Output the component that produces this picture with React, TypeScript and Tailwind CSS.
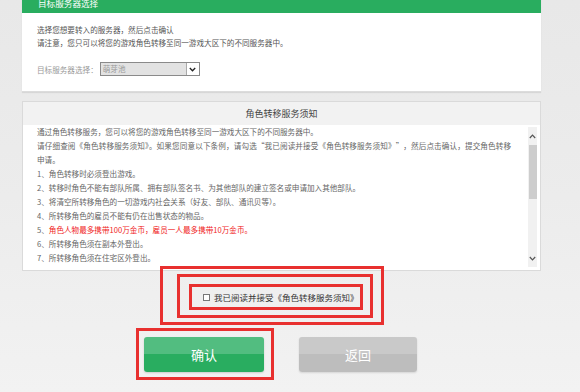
import React from "react";

const Chevron = ({ up }: { up?: boolean }) => (
  <svg width="7" height="5" viewBox="0 0 7 5" className="block">
    <path
      d={up ? "M0.8 4 L3.5 1.2 L6.2 4" : "M0.8 1 L3.5 3.8 L6.2 1"}
      fill="none"
      stroke="#555"
      strokeWidth="1.2"
    />
  </svg>
);

const Q = ({ c }: { c: string }) => (
  <span className="inline-block w-[1em] text-center">{c}</span>
);

export default function App() {
  const lines: { n?: string; t: React.ReactNode; red?: boolean; cls?: string }[] = [
    { t: "通过角色转移服务，您可以将您的游戏角色转移至同一游戏大区下的不同服务器中。" },
    {
      t: (
        <>
          请仔细查阅《角色转移服务须知》。如果您同意以下条例，请勾选
          <Q c={"\u201C"} />
          我已阅读并接受《角色转移服务须知》
          <Q c={"\u201D"} />
          ，然后点击确认，提交角色转移
        </>
      ),
      cls: "tracking-[0.12px]",
    },
    { t: "申请。" },
    { n: "1、", t: "角色转移时必须登出游戏。" },
    { n: "2、", t: "转移时角色不能有部队所属、拥有部队签名书、为其他部队的建立签名或申请加入其他部队。" },
    { n: "3、", t: "将清空所转移角色的一切游戏内社会关系（好友、部队、通讯贝等）。" },
    { n: "4、", t: "所转移角色的雇员不能有仍在出售状态的物品。" },
    { n: "5、", t: "角色人物最多携带100万金币，雇员一人最多携带10万金币。", red: true },
    { n: "6、", t: "所转移角色须在副本外登出。" },
    { n: "7、", t: "所转移角色须在住宅区外登出。" },
  ];

  return (
    <div className="w-[580px] h-[392px] overflow-hidden bg-gradient-to-b from-[#e8e8e8] via-[#ececec] to-[#f2f2f2] font-['Noto_Sans_CJK_SC',sans-serif]">
      {/* Panel 1 */}
      <div className="ml-[22px] w-[519px] mt-[-11px] shadow-[0_1px_1px_rgba(0,0,0,0.08)]">
        <div className="h-[24px] bg-[#29ad5f] flex items-end pb-[5px] pl-[16px] text-white text-[8.6px] leading-[10px]">
          目标服务器选择
        </div>
        <div className="h-[79px] bg-white border-b border-[#dcdcdc] pl-[15px] pt-[10px] text-[7.6px] leading-[13px] text-[#555]">
          <div className="whitespace-nowrap">选择您想要转入的服务器，然后点击确认</div>
          <div className="whitespace-nowrap">请注意，您只可以将您的游戏角色转移至同一游戏大区下的不同服务器中。</div>
          <div className="mt-[13px] flex items-center h-[14px]">
            <span className="text-[#999] whitespace-nowrap">目标服务器选择：</span>
            <div className="ml-[2px] w-[100px] h-[14px] border border-[#8a8a8a] bg-[#e2e2e2] flex items-center">
              <span className="flex-1 pl-[2px] text-[#999] leading-[12px]">萌芽池</span>
              <div className="w-[13px] h-[12px] bg-white border-l border-[#aaa] flex items-center justify-center">
                <svg width="7" height="5" viewBox="0 0 7 5" className="block">
                  <path d="M0.8 1 L3.5 3.8 L6.2 1" fill="none" stroke="#222" strokeWidth="1.3" />
                </svg>
              </div>
            </div>
          </div>
        </div>
      </div>

      {/* Panel 2 */}
      <div className="ml-[22px] w-[519px] mt-[9px] border border-[#dadada] bg-white">
        <div className="h-[23px] bg-[#f2f2f2] flex items-center justify-center text-[9px] text-[#444]">
          角色转移服务须知
        </div>
        <div className="flex h-[145px]">
          <div className="flex-1 pl-[14px] text-[7.6px] leading-[14px] text-[#666]">
            {lines.map((l, i) => (
              <div key={i} className={"whitespace-nowrap " + (l.cls ?? "")}>
                {l.n && <span>{l.n}</span>}
                <span className={l.red ? "text-[#f01c1c]" : ""}>{l.t}</span>
              </div>
            ))}
          </div>
          <div className="w-[9px] mr-[3px] mt-[2px] mb-[3px] bg-[#f1f1f1] flex flex-col items-center">
            <div className="h-[18px] flex items-center justify-center">
              <Chevron up />
            </div>
            <div className="w-[8px] h-[54px] bg-[#cdcdcd]" />
            <div className="flex-1" />
            <div className="h-[18px] flex items-center justify-center">
              <Chevron />
            </div>
          </div>
        </div>
      </div>

      {/* Agree checkbox with annotation boxes */}
      <div className="ml-[160px] mt-[-5px] w-[224px] h-[59px] border-[3px] border-[#e8302f] pt-[5px] pl-[14px]">
        <div className="w-[196px] h-[44px] border-[3px] border-[#e8302f] pt-[7px] pl-[9px]">
          <div className="w-[174px] h-[26px] border-[3px] border-[#e8302f] flex items-center pl-[11px]">
            <span className="w-[7px] h-[7px] border border-[#777] bg-white mr-[4px] shrink-0" />
            <span className="text-[8.5px] text-[#333] whitespace-nowrap leading-[10px]">
              我已阅读并接受《角色转移服务须知》
            </span>
          </div>
        </div>
      </div>

      {/* Buttons */}
      <div className="flex mt-[3px]">
        <div className="ml-[136px] w-[138px] h-[52px] border-[3px] border-[#e8302f] pt-[6px] pl-[5px]">
          <div className="w-[120px] h-[35px] rounded-[3px] overflow-hidden flex flex-col relative shadow-[0_1px_2px_rgba(0,0,0,0.15)]">
            <div className="h-[17px] bg-[#52bd80]" />
            <div className="flex-1 bg-[#29ad60]" />
            <span className="absolute inset-0 flex items-center justify-center text-white text-[13px]">确认</span>
          </div>
        </div>
        <div className="ml-[25px] mt-[9px] w-[118px] h-[35px] rounded-[3px] overflow-hidden flex flex-col relative shadow-[0_1px_2px_rgba(0,0,0,0.12)]">
          <div className="h-[17px] bg-[#c9c9c9]" />
          <div className="flex-1 bg-[#bdbdbd]" />
          <span className="absolute inset-0 flex items-center justify-center text-white text-[13px]">返回</span>
        </div>
      </div>
    </div>
  );
}
